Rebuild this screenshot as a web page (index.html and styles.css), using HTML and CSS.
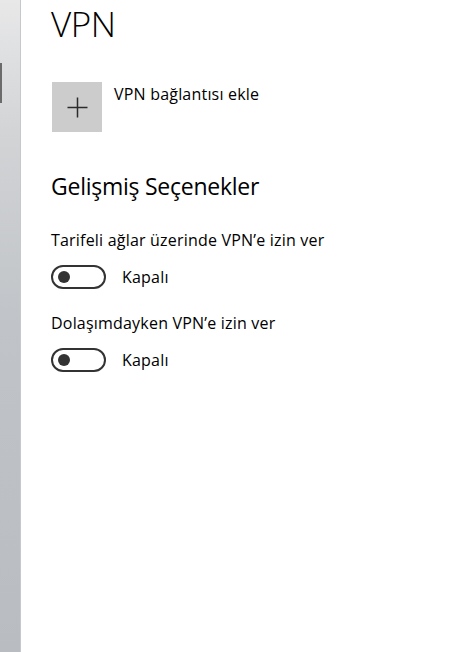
FILE: index.html
```html
<!DOCTYPE html>
<html lang="tr">
<head>
<meta charset="utf-8">
<title>VPN</title>
<link rel="stylesheet" href="styles.css">
</head>
<body>
<div class="app">
  <aside class="sidebar"><span class="marker"></span></aside>
  <main class="content">
    <h1 class="title">VPN</h1>
    <div class="add-row">
      <div class="add-box">
        <svg width="21" height="21" viewBox="0 0 21 21" aria-hidden="true">
          <path d="M10.5 0.5V20.5M0.5 10.5H20.5" stroke="#2b2b2b" stroke-width="1.5" fill="none"/>
        </svg>
      </div>
      <div class="add-label">VPN bağlantısı ekle</div>
    </div>
    <h2 class="subtitle">Gelişmiş Seçenekler</h2>
    <section class="setting">
      <div class="setting-label">Tarifeli ağlar üzerinde VPN’e izin ver</div>
      <div class="toggle-row">
        <span class="toggle"><span class="knob"></span></span>
        <span class="toggle-text">Kapalı</span>
      </div>
    </section>
    <section class="setting">
      <div class="setting-label">Dolaşımdayken VPN’e izin ver</div>
      <div class="toggle-row">
        <span class="toggle"><span class="knob"></span></span>
        <span class="toggle-text">Kapalı</span>
      </div>
    </section>
  </main>
</div>
</body>
</html>
```
FILE: styles.css
```css
html, body {
  margin: 0;
  padding: 0;
  background: #ffffff;
}
body {
  font-family: "Open Sans", "Noto Sans", sans-serif;
  color: #000000;
}
.app {
  display: flex;
  height: 652px;
  overflow: hidden;
}
.sidebar {
  width: 20px;
  flex: none;
  background: linear-gradient(to bottom, #e8e8e9 0%, #d2d4d6 20%, #c0c3c7 50%, #b9bcc0 100%);
  border-right: 1px solid #c6c8cb;
  padding-top: 63px;
  box-sizing: content-box;
}
.marker {
  display: block;
  width: 2px;
  height: 40px;
  background: #6b6b6b;
}
.content {
  padding-left: 30px;
  flex: 1;
}
.title {
  margin: 0;
  font-size: 35px;
  font-weight: 300;
  line-height: 47px;
  letter-spacing: -0.5px;
}
.add-row {
  display: flex;
  align-items: flex-start;
  margin-top: 35px;
  margin-left: 1px;
}
.add-box {
  width: 50px;
  height: 50px;
  background: #cccccc;
  display: flex;
  align-items: center;
  justify-content: center;
}
.add-label {
  margin-left: 12px;
  padding-top: 2px;
  font-size: 16px;
  line-height: 20px;
  letter-spacing: 0.2px;
}
.subtitle {
  margin: 39px 0 0;
  font-size: 23px;
  font-weight: 400;
  line-height: 30px;
  letter-spacing: -0.25px;
}
.setting {
  margin-top: 29px;
}
.setting + .setting {
  margin-top: 24px;
}
.setting-label {
  font-size: 16px;
  line-height: 20px;
  letter-spacing: 0.2px;
}
.toggle-row {
  display: flex;
  align-items: center;
  margin-top: 15px;
}
.toggle {
  width: 55px;
  height: 24px;
  box-sizing: border-box;
  border: 2px solid #333333;
  border-radius: 12px;
  display: flex;
  align-items: center;
  padding-left: 5px;
}
.knob {
  width: 12px;
  height: 12px;
  border-radius: 50%;
  background: #333333;
}
.toggle-text {
  margin-left: 16px;
  font-size: 16px;
  line-height: 20px;
  letter-spacing: 0.2px;
}
```
